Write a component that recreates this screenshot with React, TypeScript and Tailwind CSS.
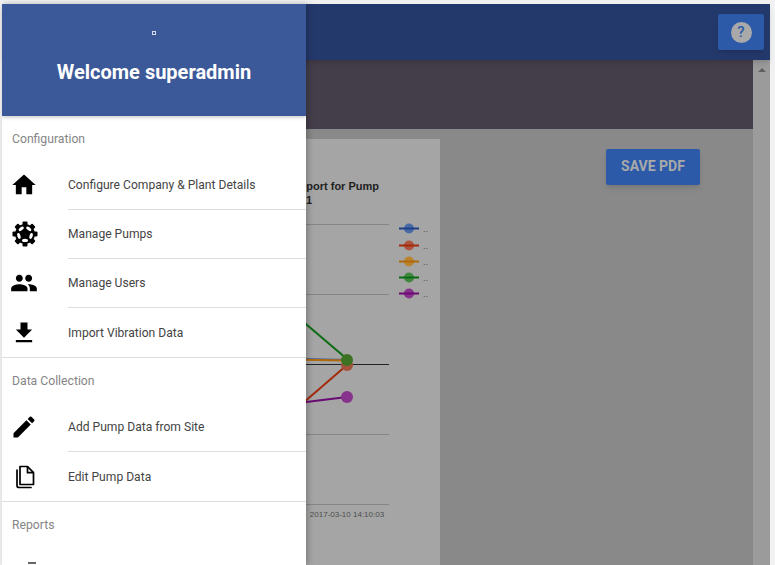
import { MdHome, MdPeople, MdFileDownload, MdEdit } from "react-icons/md";
import type { ReactNode } from "react";

function GearIcon() {
  return (
    <svg width="26" height="26" viewBox="0 0 26 26">
      <g fill="#000">
        {[0, 45, 90, 135, 180, 225, 270, 315].map((a) => (
          <rect key={a} x="10.5" y="0.5" width="5" height="6" rx="1" transform={`rotate(${a} 13 13)`} />
        ))}
      </g>
      <circle cx="13" cy="13" r="10" fill="#000" />
      <g fill="#fff">
        {[36, 108, 180, 252, 324].map((a) => (
          <ellipse key={a} cx="13" cy="6.6" rx="3" ry="1.6" transform={`rotate(${a} 13 13)`} />
        ))}
      </g>
    </svg>
  );
}

function PagesIcon() {
  return (
    <svg width="20" height="24" viewBox="0 0 20 24" fill="none" stroke="#000" strokeWidth="1.7" className="ml-[3px]">
      <path d="M5 1.5h7.5l6 6.2V19.5H5z" strokeLinejoin="round" />
      <path d="M12.5 1.5v6.2h6" strokeLinejoin="round" />
      <path d="M2 5v15.5c0 1.2.8 2 2 2h12" strokeLinecap="round" />
    </svg>
  );
}

function MenuItem({ icon, label, className }: { icon: ReactNode; label: string; className: string }) {
  return (
    <div className={`flex items-center ${className}`}>
      <div className="w-[66px] pl-[10px] flex items-center">{icon}</div>
      <span className="text-[12.1px] text-[#444444]">{label}</span>
    </div>
  );
}

function Divider({ inset }: { inset?: boolean }) {
  return <div className={`h-px shrink-0 bg-[#dddddd] ${inset ? "ml-[66px]" : ""}`} />;
}

function SectionTitle({ children }: { children: ReactNode }) {
  return <div className="h-[46px] shrink-0 flex items-center pl-[10px] text-[12.2px] text-[#858585]">{children}</div>;
}

function Chart() {
  const grid = [224, 294, 434, 504];
  const legend = [
    { y: 228, line: "#1d3f86", dot: "#4a6aa5" },
    { y: 245, line: "#a32a0a", dot: "#ad5540" },
    { y: 261, line: "#b0690a", dot: "#b98430" },
    { y: 277, line: "#0b6b12", dot: "#40883f" },
    { y: 293, line: "#6a0a75", dot: "#87328c" },
  ];
  return (
    <svg width="300" height="426" viewBox="140 139 300 426" className="block">
      <text x="379" y="190" textAnchor="end" fontSize="11" fontWeight="700" fontFamily="Liberation Sans" fill="#1f1f1f">
        Vibration Report for Pump
      </text>
      <text x="312" y="204" textAnchor="end" fontSize="11" fontWeight="700" fontFamily="Liberation Sans" fill="#1f1f1f">
        1
      </text>
      {grid.map((y) => (
        <line key={y} x1="140" x2="389" y1={y + 0.5} y2={y + 0.5} stroke="#858585" />
      ))}
      <line x1="140" x2="389" y1="364.5" y2="364.5" stroke="#222222" />
      <line x1="300" y1="319" x2="347" y2="359" stroke="#0b6b12" strokeWidth="2" />
      <line x1="290" y1="358.5" x2="347" y2="360" stroke="#4a6aa5" strokeWidth="2" />
      <line x1="290" y1="359.5" x2="347" y2="360.5" stroke="#b0690a" strokeWidth="2" />
      <line x1="296" y1="409" x2="347" y2="365" stroke="#a32a0a" strokeWidth="2" />
      <line x1="290" y1="404" x2="347" y2="397" stroke="#6a0a75" strokeWidth="2" />
      <circle cx="347" cy="397" r="6" fill="#87328c" />
      <circle cx="347" cy="365" r="6" fill="#a5523c" />
      <circle cx="347" cy="360" r="6" fill="#3c7222" />
      <text x="347" y="517" textAnchor="middle" fontSize="8" fontFamily="Liberation Sans" fill="#4d4d4d">
        2017-03-10 14:10:03
      </text>
      {legend.map((l) => (
        <g key={l.y}>
          <circle cx="409" cy={l.y + 0.5} r="5" fill={l.dot} />
          <line x1="399" x2="419" y1={l.y + 0.5} y2={l.y + 0.5} stroke={l.line} strokeWidth="2" />
          <text x="423" y={l.y + 4} fontSize="9" fontFamily="Liberation Sans" fill="#4d4d4d">..</text>
        </g>
      ))}
    </svg>
  );
}

export default function App() {
  return (
    <div className="relative w-[775px] h-[565px] overflow-hidden bg-[#f1f1f1] pt-[4px] pl-[2px] pr-[5px] font-['Roboto',sans-serif]">
      {/* Page behind the drawer */}
      <div className="flex flex-col h-[561px]">
        <header className="h-[56px] shrink-0 bg-[#24396b] flex items-center justify-end pr-[6px] shadow-md z-10">
          <div className="w-[46px] h-[36px] rounded-[2px] bg-[#2c5aa8] flex items-center justify-center shadow-md">
            <div className="w-[21px] h-[21px] rounded-full bg-[#a9a9a9] flex items-center justify-center text-[15px] font-medium text-[#2c5aa8]">?</div>
          </div>
        </header>
        <div className="flex flex-1 min-h-0">
          <div className="flex-1 flex flex-col min-w-0">
            <div className="h-[69px] shrink-0 bg-[#443e4a]" />
            <div className="flex-1 bg-[#898989] flex pt-[10px] pl-[138px]">
              <div className="w-[300px] bg-[#a5a5a5] overflow-hidden">
                <Chart />
              </div>
              <div className="ml-[166px] mt-[10px] w-[94px] h-[36px] pb-[2px] rounded-[2px] bg-[#2c5aa8] shadow-md flex items-center justify-center text-[14px] font-bold text-[#a9a9a9]">
                SAVE PDF
              </div>
            </div>
          </div>
          {/* Scrollbar */}
          <div className="w-[17px] bg-[#9b9b9b] flex justify-center pt-[8px]">
            <div className="w-0 h-0 border-x-[4px] border-x-transparent border-b-[4px] border-b-[#5f5f5f]" />
          </div>
        </div>
      </div>

      {/* Drawer */}
      <aside className="absolute z-20 left-[2px] top-[4px] bottom-0 w-[304px] bg-white flex flex-col overflow-hidden shadow-[2px_0_6px_rgba(0,0,0,0.25)]">
        <div className="h-[112px] shrink-0 bg-[#3b5998] flex flex-col items-center shadow-[0_1px_4px_rgba(0,0,0,0.25)]">
          <div className="mt-[27px] w-[4px] h-[4px] border border-[#d5dbe8]" />
          <h1 className="mt-[23px] text-[20px] leading-[28px] font-bold text-white">Welcome superadmin</h1>
        </div>
        <SectionTitle>Configuration</SectionTitle>
        <MenuItem className="h-[47px] shrink-0 pb-[1px]" icon={<MdHome size={28} color="#000" className="-ml-[2px]" />} label="Configure Company & Plant Details" />
        <Divider inset />
        <MenuItem className="h-[48px] shrink-0" icon={<GearIcon />} label="Manage Pumps" />
        <Divider inset />
        <MenuItem className="h-[48px] shrink-0" icon={<MdPeople size={28} color="#000" className="-ml-[2px]" />} label="Manage Users" />
        <Divider inset />
        <MenuItem className="h-[49px] shrink-0 pt-[1px]" icon={<MdFileDownload size={28} color="#000" className="-ml-[2px]" />} label="Import Vibration Data" />
        <Divider />
        <SectionTitle>Data Collection</SectionTitle>
        <MenuItem className="h-[47px] shrink-0 pb-[1px]" icon={<MdEdit size={28} color="#000" className="-ml-[2px]" />} label="Add Pump Data from Site" />
        <Divider inset />
        <MenuItem className="h-[49px] shrink-0 pt-[1px]" icon={<PagesIcon />} label="Edit Pump Data" />
        <Divider />
        <SectionTitle>Reports</SectionTitle>
        <div className="shrink-0 ml-[26px] mt-[14px] w-[8px] h-[2px] bg-[#666666]" />
      </aside>
    </div>
  );
}
